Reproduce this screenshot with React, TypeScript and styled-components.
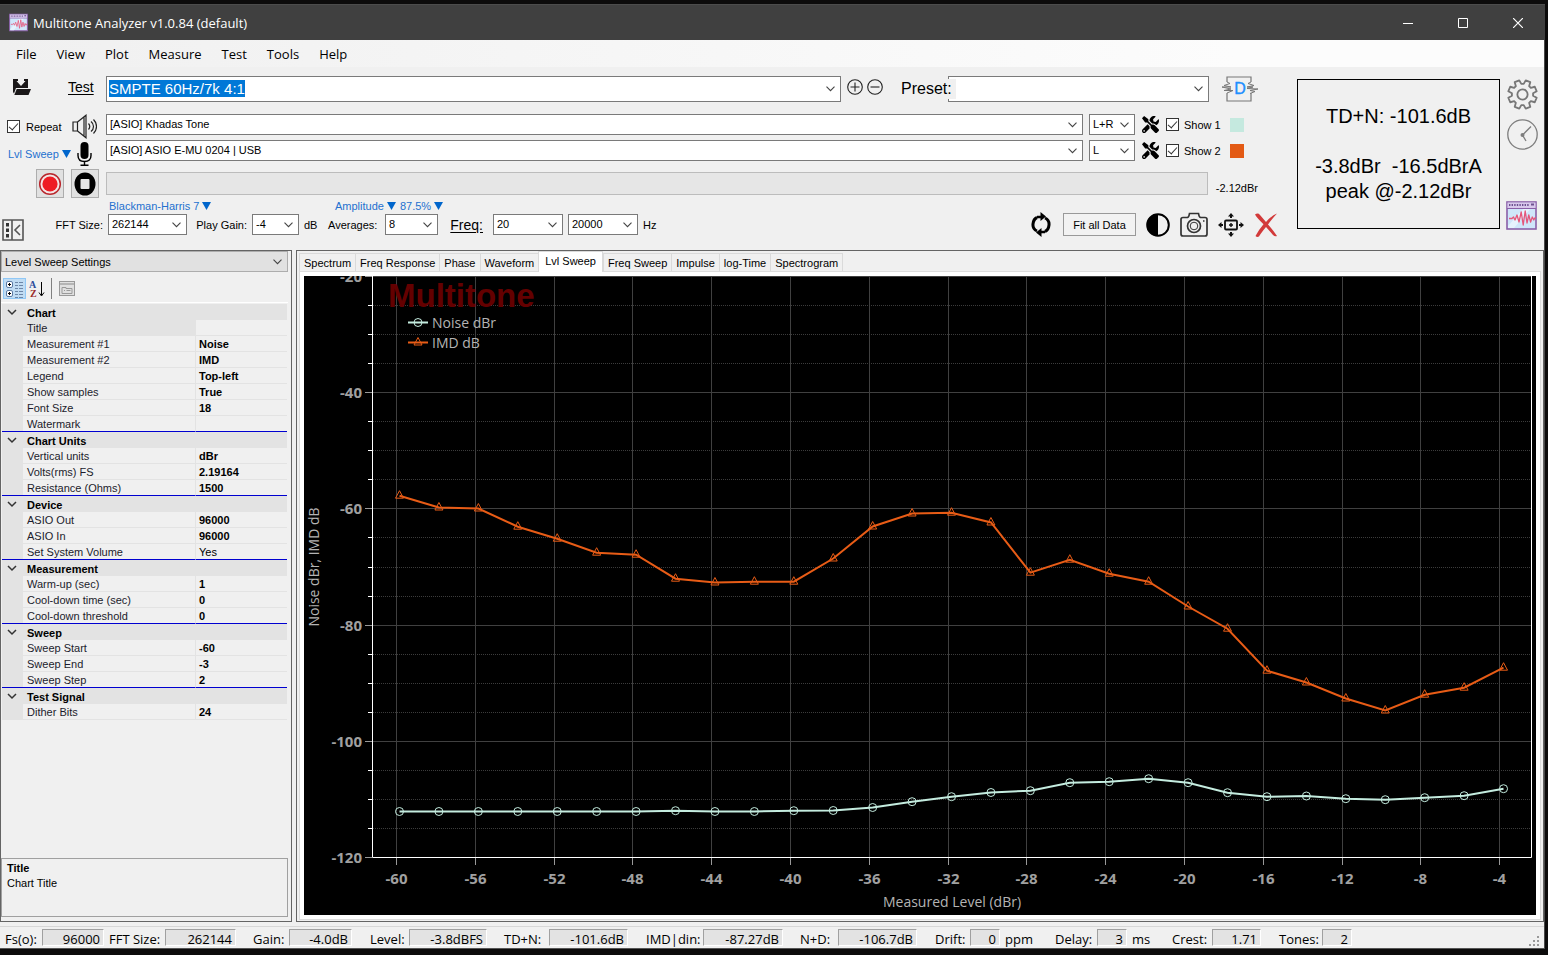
import React, { useEffect, useRef } from "react";
import styled, { createGlobalStyle } from "styled-components";
import { FaTools } from "react-icons/fa";

const sans = `"Liberation Sans", Arial, sans-serif`;
const ui = `"Open Sans", "Noto Sans", sans-serif`;

const GlobalStyle = createGlobalStyle`
  *, *::before, *::after { box-sizing: border-box; }
  body { margin: 0; background: #0c0b0b; font-family: ${sans}; font-size: 11px; color: #000; }
  button, input, select { font: inherit; color: inherit; margin: 0; }
  svg { display: block; flex: none; }
`;

/* ---------- window frame ---------- */

const Desktop = styled.div`
  min-height: 100vh;
  display: flex;
  padding: 4px 3px 6px 0;
  background: #0c0b0b;
`;

const Window = styled.div`
  flex: 1;
  min-width: 0;
  display: flex;
  flex-direction: column;
  background: #f0f0f0;
  border-right: 1px solid #4a4a4a;
`;

const TitleBar = styled.header`
  height: 36px;
  display: flex;
  align-items: center;
  padding-left: 9px;
  gap: 5px;
  background: #404040;
  border-top: 1px solid #4c4c4c;
  color: #fff;
  margin-right: -1px;
`;

const TitleText = styled.h1`
  flex: 1;
  margin: 0;
  font: 400 13px/20px ${ui};
`;

const CaptionButtons = styled.div`
  display: flex;
`;

const CaptionButton = styled.button`
  width: 55px;
  height: 35px;
  padding: 0;
  border: 0;
  background: transparent;
  display: flex;
  align-items: center;
  justify-content: center;
`;

const MenuBar = styled.nav`
  height: 27px;
  display: flex;
  align-items: center;
  padding-left: 6px;
  background: linear-gradient(90deg, #f0f0f0, #fcfcfc 80%);
  font: 13px/20px ${ui};
`;

const MenuItem = styled.button`
  padding: 0 10px;
  border: 0;
  background: transparent;
  line-height: 24px;
`;

/* ---------- shared controls ---------- */

const ComboBox = styled.span<{ $width?: number; $height?: number; $flat?: boolean }>`
  position: relative;
  display: flex;
  flex: ${(p) => (p.$width ? `0 0 ${p.$width}px` : "1 1 0")};
  min-width: 0;
  height: ${(p) => p.$height ?? 21}px;
  background: ${(p) => (p.$flat ? "#e1e1e1" : "#fff")};
  border: 1px solid ${(p) => (p.$flat ? "#adadad" : "#7a7a7a")};

  select, input {
    appearance: none;
    width: 100%;
    min-width: 0;
    padding: 0 20px ${(p) => (p.$flat ? 0 : 2)}px 3px;
    border: 0;
    border-radius: 0;
    outline: 0;
    background: transparent;
  }
  input {
    padding: 0 24px 2px 2px;
    font-size: 15px;
  }
  input::selection { background: #0078d7; color: #fff; }
  svg {
    position: absolute;
    right: 5px;
    top: 50%;
    margin-top: -3px;
    pointer-events: none;
  }
`;

const Chevron = () => (
  <svg width="9" height="6" viewBox="0 0 9 6" fill="none" stroke="#444" strokeWidth="1.1">
    <path d="M.5.7 4.5 4.7 8.5.7" />
  </svg>
);

type ComboProps = { label: string; value: string; width?: number; height?: number; flat?: boolean };
const Combo = ({ label, value, width, height, flat }: ComboProps) => (
  <ComboBox $width={width} $height={height} $flat={flat}>
    <select aria-label={label} defaultValue={value}>
      <option value={value}>{value}</option>
    </select>
    <Chevron />
  </ComboBox>
);

const CheckLabel = styled.label`
  display: flex;
  align-items: center;
  gap: 6px;
  flex: none;
  white-space: nowrap;
`;

const CheckInput = styled.input`
  appearance: none;
  width: 13px;
  height: 13px;
  border: 1px solid #333;
  background: #fff;
  display: grid;
  place-items: center;
  &:checked::after {
    content: "";
    width: 9px;
    height: 5px;
    border: solid #333;
    border-width: 0 0 1px 1px;
    transform: rotate(-48deg);
    margin-top: -3px;
  }
`;

const IconButton = styled.button<{ $framed?: boolean }>`
  flex: none;
  padding: 0;
  border: ${(p) => (p.$framed ? "1px solid #adadad" : "0")};
  background: ${(p) => (p.$framed ? "#e1e1e1" : "transparent")};
  width: ${(p) => (p.$framed ? "28px" : "auto")};
  height: ${(p) => (p.$framed ? "29px" : "auto")};
  display: flex;
  align-items: center;
  justify-content: center;
`;

const LinkButton = styled.button`
  display: flex;
  align-items: center;
  gap: 3px;
  padding: 0;
  border: 0;
  background: transparent;
  color: #2470cf;
  white-space: nowrap;
`;

const Triangle = () => (
  <svg width="9" height="8" viewBox="0 0 9 8"><path d="M0 0h9L4.5 8z" fill="#0066cc" /></svg>
);

/* ---------- header tool area ---------- */

const Header = styled.section`
  height: 183px;
  display: flex;
  padding: 9px 6px 0 0;
`;

const Tools = styled.div`
  flex: 1;
  min-width: 0;
`;

const Row = styled.div<{ $height: number; $after?: number }>`
  display: flex;
  align-items: center;
  height: ${(p) => p.$height}px;
  margin: 0 20px ${(p) => p.$after ?? 0}px 0;
`;

const Side = styled.div<{ $left: number; $gap: number; $top?: number }>`
  flex: 0 0 106px;
  display: flex;
  align-items: center;
  gap: ${(p) => p.$gap}px;
  padding: ${(p) => p.$top ?? 0}px 0 0 ${(p) => p.$left}px;
`;

const Underlined = styled.a`
  color: inherit;
  font-size: 14px;
  text-decoration: underline;
  text-underline-offset: 2px;
`;

const TestSide = styled(Side)`
  padding-bottom: 4px;
`;

const RoundPair = styled.div`
  display: flex;
  gap: 4px;
  padding: 0 12px 4px 6px;
`;

const PresetLabel = styled.span`
  position: relative;
  z-index: 1;
  flex: 0 0 61px;
  margin-right: -8px;
  padding-left: 6px;
  background: #f0f0f0;
  font-size: 16px;
  line-height: 20px;
`;

const DistortionSlot = styled.div`
  flex: 0 0 49px;
  padding-left: 13px;
`;

const ChannelTools = styled.div`
  flex: 0 0 175px;
  display: flex;
  align-items: center;
  gap: 7px;
  padding-left: 6px;
  ${CheckLabel} { width: 57px; gap: 5px; }
`;

const Swatch = styled.span<{ $color: string }>`
  width: 14px;
  height: 14px;
  background: ${(p) => p.$color};
`;

const Meter = styled.div`
  flex: 1;
  height: 23px;
  background: #e6e6e6;
  border: 1px solid #bcbcbc;
`;

const MeterValue = styled.span`
  flex: 0 0 49px;
  padding: 8px 0 0 8px;
`;

const Links = styled.div`
  height: 16px;
  display: flex;
  align-items: center;
  gap: 4px;
  padding-left: 109px;
`;

const LinkSlot = styled.div`
  flex: 0 0 222px;
`;

const Params = styled.div`
  display: flex;
  align-items: center;
  height: 21px;
  padding-left: 2px;
`;

const CollapseSlot = styled(IconButton)`
  width: 22px;
  padding-top: 11px;
`;

const Caption = styled.span<{ $width: number; $end?: boolean }>`
  flex: 0 0 ${(p) => p.$width}px;
  padding: 0 5px;
  white-space: nowrap;
  text-align: ${(p) => (p.$end ? "right" : "left")};
`;

const Gap = styled.span`
  flex: 0 0 5px;
`;

const Spacer = styled.div`
  flex: 1;
`;

const Commands = styled.div`
  display: flex;
  align-items: center;
  gap: 10px;
`;

const FitButton = styled.button`
  width: 73px;
  height: 23px;
  margin: 0 0 0 2px;
  padding: 0;
  border: 1px solid #999;
  background: #f2f2f2;
`;

const Readout = styled.output`
  flex: 0 0 203px;
  height: 150px;
  margin: 3px 6px 0 19px;
  border: 1px solid #000;
  display: flex;
  flex-direction: column;
  align-items: center;
  justify-content: center;
  font-size: 20px;
  line-height: 25px;
  white-space: pre;
`;

const RightIcons = styled.div`
  flex: 0 0 32px;
  display: flex;
  flex-direction: column;
  gap: 9px;
  height: 155px;
  padding-top: 3px;
`;

/* ---------- icons ---------- */

const AppIcon = ({ size }: { size: number }) => (
  <svg width={size} height={size} viewBox="0 0 31 31">
    <rect x="1" y="2" width="29" height="27" fill="#cfe6fa" stroke="#8a5fa8" strokeWidth="1.6" />
    <path d="M18 8h7L8 28H2v-2z" fill="#e6f2fd" />
    <rect x="1.5" y="2.5" width="28" height="5.5" fill="#d9c8ec" />
    <path d="M3 5h20" stroke="#6d5290" strokeWidth="2" strokeDasharray="1.4 1.2" />
    <path d="M1 8.5h29" stroke="#8a5fa8" />
    <path d="M25 4.5h3" stroke="#6d5290" strokeWidth="2" />
    <path d="M3 18.500h3l1.500-1.500 1.500 3 2-5 2 7 2.200-10 2 13 2-14 1.800 12 1.800-8 1.800 7 1.700-5 1.500 3 1-2h1.200" fill="none" stroke="#e5567b" strokeWidth="1.3" strokeLinejoin="round" />
  </svg>
);

const FolderIcon = () => (
  <svg width="18" height="18" viewBox="0 0 18 18" fill="#1a1718">
    <path d="M0 1h5v2H3.500L8 8l4.500-5H11V1h4v9H3L1 15.500 0 14z" />
    <path d="M7 0h2.500v3H12L8.400 6.500 4.800 3H7z" fill="#f0f0f0" />
    <path d="M3.700 11H18l-2.500 6H1.300z" />
  </svg>
);

const SpeakerIcon = () => (
  <svg width="25" height="25" viewBox="0 0 25 25" fill="none" stroke="#222" strokeWidth="1.200">
    <path d="M1 8h4.500v9H1zM5.500 8 14 1.200v22.600L5.500 17M12 3v19" />
    <path d="M16.500 9.500q2.500 3 0 6M19 7.500q2.500 2 2.500 5t-2.500 5M21.500 5.500q3 3 3 7t-3 7" />
  </svg>
);

const MicIcon = () => (
  <svg width="15" height="24" viewBox="0 0 15 24">
    <rect x="3.500" y="0" width="8" height="17" rx="4" fill="#000" />
    <path d="M1 11v2.500q0 6 6.500 6t6.500-6V11M7.500 19.500V23M3.500 23.200h8" fill="none" stroke="#000" strokeWidth="1.400" />
  </svg>
);

const RecordIcon = () => (
  <svg width="24" height="24" viewBox="0 0 24 24">
    <circle cx="12" cy="12" r="10.300" fill="#f3e6e6" stroke="#b8272d" strokeWidth="1.500" />
    <circle cx="12" cy="12" r="7.600" fill="#ee1c24" />
  </svg>
);

const StopIcon = () => (
  <svg width="22" height="24" viewBox="0 0 22 24">
    <ellipse cx="11" cy="12" rx="10.500" ry="11.500" fill="#000" />
    <rect x="6.500" y="7" width="9" height="10" rx="1" fill="#e6e6e6" />
  </svg>
);

const RoundIcon = ({ plus }: { plus?: boolean }) => (
  <svg width="16" height="16" viewBox="0 0 16 16" fill="none" stroke="#222" strokeWidth="1.100">
    <circle cx="8" cy="8" r="7.300" />
    <path d={plus ? "M3.500 8h9M8 3.500v9" : "M3.500 8h9"} />
  </svg>
);

const DistortionIcon = () => (
  <svg width="36" height="26" viewBox="0 0 36 26" fill="none" stroke="#777" strokeWidth="1.200">
    <path d="M5 6V1h24v5M5 17v8h24v-8" />
    <path d="M5 6l3 1.500-6 2 7 1.500H0l9 2-7 1.500h9l-6 2.500M29 6l-3 1.500 6 2-7 1.500h6l-6 1.500 11 .500-8 1.500 5 1-5 2" strokeWidth="1" />
    <text x="18" y="18" textAnchor="middle" fontFamily="Liberation Sans" fontSize="16" fill="#1e8fff" stroke="#1e8fff" strokeWidth=".4">D</text>
  </svg>
);

const CollapseIcon = () => (
  <svg width="22" height="22" viewBox="0 0 22 22" fill="none" stroke="#555" strokeWidth="1.600">
    <path d="M1 1h20v20H1zM10 1v20M18 6l-5 5 5 5" />
    <path d="M5.500 4v3.500M5.500 9.500V13M5.500 15v3.500" stroke="#333" strokeWidth="3" />
  </svg>
);

const RefreshIcon = () => (
  <svg width="20" height="25" viewBox="0 0 20 25" fill="none" stroke="#000" strokeWidth="3">
    <path d="M6 19Q1.500 17 2 12q.5-5 4-6.500M14 6Q18.500 8 18 13q-.5 5-4 6.500" />
    <path d="M9.500 0 15 4.500 9.500 9zM10.500 16v9L5 20.500z" fill="#000" stroke="none" />
    <path d="M6 5h5M14 20H9" strokeWidth="2.500" />
  </svg>
);

const ContrastIcon = () => (
  <svg width="24" height="24" viewBox="0 0 24 24">
    <circle cx="12" cy="12" r="10.800" fill="#f0f0f0" stroke="#000" strokeWidth="2" />
    <path d="M12 1a11 11 0 0 0 0 22z" />
  </svg>
);

const CameraIcon = () => (
  <svg width="28" height="25" viewBox="0 0 28 25" fill="none" stroke="#333" strokeWidth="1.700">
    <path d="M3 5.500h4.500Q9 5 9.500 1.500h9Q19 5 20.500 5.500H25q2 0 2 2V22q0 2-2 2H3q-2 0-2-2V7.500q0-2 2-2z" />
    <circle cx="14" cy="14" r="6.500" />
    <circle cx="14" cy="14" r="3.800" strokeWidth="1" />
    <path d="M23 9h1.500" />
  </svg>
);

const MoveIcon = () => (
  <svg width="26" height="24" viewBox="0 0 26 24" fill="#111">
    <rect x="7" y="7.500" width="12" height="9" rx="1" fill="none" stroke="#111" strokeWidth="1.800" />
    <path d="M13 0l3 3.500h-2V5h-2V3.500h-2zM13 24l3-3.500h-2V19h-2v1.500h-2zM0 12l3.500-3v2H5v2H3.500v2zM26 12l-3.500-3v2H21v2h1.500v2zM12.300 10h1.400v1.300H15v1.400h-1.300V14h-1.400v-1.300H11v-1.400h1.300z" />
  </svg>
);

const DeleteIcon = () => (
  <svg width="24" height="24" viewBox="0 0 24 24">
    <path d="M1 1.500Q4-.5 6 2l6 7Q17 3 23 .5 18 6 14 11.500q5 5.500 9 11.500-2 1-4-1l-7-8Q7 20 5 23.500q-2 1-3.500-.5 3-6 8-11.800Q3 5 1 1.500z" fill="#d23a3a" />
  </svg>
);

const gearPath = (() => {
  const pts: string[] = [];
  for (let i = 0; i < 8; i++) {
    const a = (i * Math.PI) / 4 - Math.PI / 2;
    [[-0.28, 11], [-0.17, 15], [0.17, 15], [0.28, 11]].forEach(([d, r]) => {
      pts.push(`${(16 + r * Math.cos(a + d)).toFixed(2)} ${(16 + r * Math.sin(a + d)).toFixed(2)}`);
    });
  }
  return `M${pts.join("L")}Z`;
})();

const GearIcon = () => (
  <svg width="31" height="31" viewBox="0 0 32 32" fill="none" stroke="#777" strokeWidth="1.900" strokeLinejoin="round">
    <g transform="rotate(22.500 16 16)"><path d={gearPath} /></g>
    <circle cx="16" cy="16" r="5.300" />
  </svg>
);

const ClockIcon = () => (
  <svg width="31" height="31" viewBox="0 0 31 31" fill="none" stroke="#7d7d7d" strokeWidth="1.300">
    <circle cx="15.500" cy="15.500" r="14.700" />
    <path d="M24 7.500 15.500 16l3.500 6" />
    <circle cx="15.500" cy="16" r="2" fill="#7d7d7d" stroke="none" />
  </svg>
);

/* ---------- property panel ---------- */

const Main = styled.main`
  flex: 1;
  display: flex;
  gap: 4px;
  min-height: 0;
`;

const Sidebar = styled.aside`
  flex: 0 0 292px;
  display: flex;
  flex-direction: column;
  border: 1px solid #646464;
  padding: 0 3px 4px 0;
`;

const SelectRow = styled.div`
  display: flex;
`;

const GridTools = styled.div`
  flex: none;
  height: 31px;
  display: flex;
  align-items: center;
  padding: 3px 0 0 2px;
  border-bottom: 1px solid #fff;
`;

const GridTool = styled.button<{ $on?: boolean }>`
  width: 23px;
  height: 21px;
  padding: 0;
  display: grid;
  place-items: center;
  background: ${(p) => (p.$on ? "#c0dcf3" : "transparent")};
  border: 1px solid ${(p) => (p.$on ? "#90c8f6" : "transparent")};
`;

const Divider = styled.span`
  width: 1px;
  height: 21px;
  background: #808080;
  margin: 0 3px 0 2px;
`;

const PropertyTable = styled.table`
  margin: 1px 0 0 1px;
  width: 285px;
  table-layout: fixed;
  border-collapse: separate;
  border-spacing: 0;
  line-height: 13px;
  th, td { height: 16px; padding: 2px 3px 0; text-align: left; white-space: nowrap; }
`;

const GutterCol = styled.col`
  width: 21px;
`;

const NameCol = styled.col`
  width: 172px;
`;

const Gutter = styled.td`
  background: #e3e3e3;
  svg { margin: 0 0 2px 2px; }
`;

const Category = styled.tr`
  background: #e3e3e3;
  td, th { border-bottom: 0; }
  th { padding-left: 4px; font-weight: 700; }
`;

const Property = styled.tr<{ $selected?: boolean; $last?: boolean }>`
  th {
    padding-left: 4px;
    font-weight: 400;
    color: #1c1c2c;
    background: ${(p) => (p.$selected ? "#e3e3e3" : "transparent")};
  }
  th, td { border-bottom: 1px solid ${(p) => (p.$last ? "#0000d0" : "#e3e3e3")}; }
`;

const Value = styled.td<{ $plain?: boolean }>`
  border-left: 1px solid #e3e3e3;
  font-weight: ${(p) => (p.$plain ? 400 : 700)};
`;

const Help = styled.section`
  height: 59px;
  margin-top: auto;
  border: 1px solid #a0a0a0;
  padding: 2px 5px;
  line-height: 15px;
  h2, p { margin: 0; font-size: 11px; }
`;

const groups: { name: string; items: [string, string][] }[] = [
  { name: "Chart", items: [["Title", ""], ["Measurement #1", "Noise"], ["Measurement #2", "IMD"], ["Legend", "Top-left"], ["Show samples", "True"], ["Font Size", "18"], ["Watermark", ""]] },
  { name: "Chart Units", items: [["Vertical units", "dBr"], ["Volts(rms) FS", "2.19164"], ["Resistance (Ohms)", "1500"]] },
  { name: "Device", items: [["ASIO Out", "96000"], ["ASIO In", "96000"], ["Set System Volume", "Yes"]] },
  { name: "Measurement", items: [["Warm-up (sec)", "1"], ["Cool-down time (sec)", "0"], ["Cool-down threshold", "0"]] },
  { name: "Sweep", items: [["Sweep Start", "-60"], ["Sweep End", "-3"], ["Sweep Step", "2"]] },
  { name: "Test Signal", items: [["Dither Bits", "24"]] },
];

/* ---------- chart panel ---------- */

const ChartPanel = styled.section`
  flex: 1;
  min-width: 0;
  display: flex;
  flex-direction: column;
  border: 1px solid #646464;
  padding: 0 2px 1px;
`;

const TabList = styled.div`
  flex: none;
  height: 20px;
  display: flex;
  align-items: flex-end;
`;

const Tab = styled.button<{ $active?: boolean }>`
  position: relative;
  z-index: ${(p) => (p.$active ? 1 : 0)};
  height: ${(p) => (p.$active ? 21 : 18)}px;
  margin: 0 0 ${(p) => (p.$active ? -1 : 0)}px 0;
  padding: 0 ${(p) => (p.$active ? 6 : 4)}px ${(p) => (p.$active ? 2 : 0)}px;
  border: 1px solid #dadada;
  border-bottom: 0;
  border-right-width: ${(p) => (p.$active ? 1 : 0)}px;
  background: ${(p) => (p.$active ? "#fff" : "#f0f0f0")};
  white-space: nowrap;
  &:last-child { border-right-width: 1px; }
`;

const TabPage = styled.div`
  flex: 1;
  display: flex;
  border: 1px solid #dcdcdc;
  background: #fff;
  padding: 4px;
`;

const Plot = styled.div`
  flex: 1;
  min-width: 0;
  background: #000;
  svg { width: 100%; height: auto; }
`;

const tabs = ["Spectrum", "Freq Response", "Phase", "Waveform", "Lvl Sweep", "Freq Sweep", "Impulse", "log-Time", "Spectrogram"];

const imd = [495.7, 507.5, 508.5, 526.7, 538.7, 552.7, 554.7, 578.7, 582.5, 581.7, 581.7, 558.5, 526.5, 513.5, 512.7, 522.5, 572.7, 559.7, 573.7, 581.7, 606.5, 628.7, 670.7, 682.5, 698.5, 710.5, 694.7, 687.7, 667.7];
const noise = [811.5, 811.5, 811.5, 811.5, 811.5, 811.5, 811.5, 810.7, 811.5, 811.5, 810.7, 810.5, 807.5, 801.7, 796.7, 792.5, 790.7, 782.7, 781.7, 778.7, 782.7, 792.7, 796.7, 796, 798.7, 799.7, 797.7, 795.7, 788.7];
const px = (i: number) => 95.5 + i * 39.43;
const toPoints = (ys: number[]) => ys.map((y, i) => `${px(i).toFixed(1)},${(y - 276).toFixed(1)}`).join(" ");
const xAt = (db: number) => Math.round(92 + (db + 60) * 19.7) + 0.5;
const yAt = (db: number) => Math.round(581 - (db + 120) * 5.81) + 0.5;

const TriangleMark = ({ x, y }: { x: number; y: number }) => (
  <path d={`M${x} ${y - 5}l4 7.500h-8z`} fill="none" stroke="#e85c16" />
);

const Chart = () => {
  const xTicks = Array.from({ length: 15 }, (_, i) => -60 + i * 4);
  const yTicks = [-20, -40, -60, -80, -100, -120];
  const minor = Array.from({ length: 19 }, (_, i) => -115 + i * 5).filter((v) => v % 20 !== 0);
  return (
    <svg viewBox="0 0 1232 639" role="img" aria-label="Level sweep chart">
      {minor.map((v) => (
        <g key={v}>
          <path d={`M69 ${yAt(v)}H1227`} stroke="#3c3c3c" strokeDasharray="1 1" />
          <path d={`M64 ${yAt(v)}h4`} stroke="#fff" />
        </g>
      ))}
      {yTicks.map((v) => (
        <g key={v}>
          <path d={`M69 ${yAt(v)}H1227`} stroke="#404040" />
          <path d={`M61 ${yAt(v)}h7`} stroke="#999" />
          <text x="58" y={yAt(v) + 5} textAnchor="end" fontFamily="Open Sans" fontWeight="700" fontSize="15" fill="#a0a0a0">{v}</text>
        </g>
      ))}
      {xTicks.map((v) => (
        <g key={v}>
          <path d={`M${xAt(v)} 0V581`} stroke="#404040" />
          <path d={`M${xAt(v)} 582v7`} stroke="#999" />
          <text x={xAt(v)} y="608" textAnchor="middle" fontFamily="Open Sans" fontWeight="700" fontSize="15" fill="#a0a0a0">{v}</text>
        </g>
      ))}
      <path d="M68.500 0V581.500H1227.500V0" fill="none" stroke="#fff" />
      <text x="84" y="31" fontFamily="Liberation Sans" fontWeight="700" fontSize="33" fill="#640000">Multitone</text>
      <g fontFamily="Open Sans" fontSize="14" fill="#b4b4b4">
        <text x="128" y="52">Noise dBr</text>
        <text x="128" y="72">IMD dB</text>
        <text x="648" y="631" textAnchor="middle">Measured Level (dBr)</text>
        <text x="15" y="291" textAnchor="middle" transform="rotate(-90 15 291)">Noise dBr, IMD dB</text>
      </g>
      <path d="M104 46.500h20" stroke="#c4ecdf" strokeWidth="2" />
      <circle cx="114" cy="46.500" r="4" fill="none" stroke="#c4ecdf" />
      <path d="M104 66.500h20" stroke="#e85c16" strokeWidth="2" />
      <TriangleMark x={114} y={66.5} />
      <polyline points={toPoints(imd)} fill="none" stroke="#e85c16" strokeWidth="2" />
      {imd.map((y, i) => <TriangleMark key={i} x={px(i)} y={y - 276} />)}
      <polyline points={toPoints(noise)} fill="none" stroke="#c4ecdf" strokeWidth="2" />
      {noise.map((y, i) => <circle key={i} cx={px(i)} cy={y - 276} r="4" fill="none" stroke="#c4ecdf" />)}
    </svg>
  );
};

/* ---------- status bar ---------- */

const StatusBar = styled.footer`
  flex: none;
  height: 27px;
  padding: 4px 0 0;
  display: flex;
`;

const StatusStrip = styled.div`
  flex: 1;
  display: flex;
  padding: 2px 4px 0 5px;
  border-top: 1px solid #d7d7d7;
  border-bottom: 1px solid #555;
  font: 13px/20px ${ui};
`;

const StatusLabel = styled.span<{ $width: number }>`
  flex: 0 0 ${(p) => p.$width}px;
  white-space: nowrap;
`;

const StatusValue = styled.span<{ $width: number; $after: number }>`
  flex: 0 0 ${(p) => p.$width}px;
  height: 17px;
  margin-right: ${(p) => p.$after}px;
  padding-right: 3px;
  border: 1px solid #fff;
  border-top-color: #a0a0a0;
  border-left-color: #a0a0a0;
  background: #e3e3e3;
  line-height: 19px;
  text-align: right;
`;

const Grip = styled.svg`
  margin: 7px 0 0 auto;
`;

const status: { label: string; lw: number; value: string; vw: number; after: number; unit?: string; uw?: number }[] = [
  { label: "Fs(o):", lw: 37, value: "96000", vw: 62, after: 5 },
  { label: "FFT Size:", lw: 56, value: "262144", vw: 71, after: 17 },
  { label: "Gain:", lw: 36, value: "-4.0dB", vw: 63, after: 18 },
  { label: "Level:", lw: 39, value: "-3.8dBFS", vw: 78, after: 17 },
  { label: "TD+N:", lw: 45, value: "-101.6dB", vw: 79, after: 18 },
  { label: "IMD|din:", lw: 57, value: "-87.27dB", vw: 80, after: 17 },
  { label: "N+D:", lw: 38, value: "-106.7dB", vw: 79, after: 18 },
  { label: "Drift:", lw: 35, value: "0", vw: 30, after: 5, unit: "ppm", uw: 50 },
  { label: "Delay:", lw: 42, value: "3", vw: 30, after: 5, unit: "ms", uw: 40 },
  { label: "Crest:", lw: 40, value: "1.71", vw: 49, after: 18 },
  { label: "Tones:", lw: 43, value: "2", vw: 30, after: 0 },
];

/* ---------- page ---------- */

const channels = [
  { device: "[ASIO] Khadas Tone", channel: "L+R", label: "Show 1", color: "#c5e9df" },
  { device: "[ASIO] ASIO E-MU 0204 | USB", channel: "L", label: "Show 2", color: "#e35a14" },
];

const ChannelControls = ({ index }: { index: number }) => {
  const c = channels[index];
  return (
    <>
      <Combo label={`Device ${index + 1}`} value={c.device} />
      <ChannelTools>
        <Combo label={`Channel ${index + 1}`} value={c.channel} width={46} />
        <IconButton aria-label="Device setup"><FaTools size={17} /></IconButton>
        <CheckLabel><CheckInput type="checkbox" defaultChecked />{c.label}</CheckLabel>
        <Swatch $color={c.color} />
      </ChannelTools>
    </>
  );
};

export default function App() {
  const testInput = useRef<HTMLInputElement>(null);
  useEffect(() => {
    testInput.current?.focus();
    testInput.current?.select();
  }, []);

  return (
    <Desktop>
      <GlobalStyle />
      <Window>
        <TitleBar>
          <AppIcon size={19} />
          <TitleText>Multitone Analyzer v1.0.84 (default)</TitleText>
          <CaptionButtons>
            <CaptionButton aria-label="Minimize">
              <svg width="10" height="10" viewBox="0 0 10 10" stroke="#fff"><path d="M0 5.500h10" /></svg>
            </CaptionButton>
            <CaptionButton aria-label="Maximize">
              <svg width="10" height="10" viewBox="0 0 10 10" stroke="#fff" fill="none"><path d="M.5.5h9v9h-9z" /></svg>
            </CaptionButton>
            <CaptionButton aria-label="Close">
              <svg width="10" height="10" viewBox="0 0 10 10" stroke="#fff" strokeWidth="1.200"><path d="M0 0l10 10M10 0 0 10" /></svg>
            </CaptionButton>
          </CaptionButtons>
        </TitleBar>

        <MenuBar>
          {["File", "View", "Plot", "Measure", "Test", "Tools", "Help"].map((m) => <MenuItem key={m}>{m}</MenuItem>)}
        </MenuBar>

        <Header>
          <Tools>
            <Row $height={26} $after={12}>
              <TestSide $left={13} $gap={37}>
                <IconButton aria-label="Load test"><FolderIcon /></IconButton>
                <Underlined href="#test">Test</Underlined>
              </TestSide>
              <ComboBox $height={26}>
                <input ref={testInput} aria-label="Test" spellCheck={false} defaultValue="SMPTE 60Hz/7k 4:1" />
                <Chevron />
              </ComboBox>
              <RoundPair>
                <IconButton aria-label="Add"><RoundIcon plus /></IconButton>
                <IconButton aria-label="Remove"><RoundIcon /></IconButton>
              </RoundPair>
              <PresetLabel>Preset:</PresetLabel>
              <Combo label="Preset" value="" width={261} height={26} />
              <DistortionSlot><DistortionIcon /></DistortionSlot>
            </Row>

            <Row $height={21} $after={5}>
              <Side $left={7} $gap={11} $top={4}>
                <CheckLabel><CheckInput type="checkbox" defaultChecked />Repeat</CheckLabel>
                <SpeakerIcon />
              </Side>
              <ChannelControls index={0} />
            </Row>

            <Row $height={21} $after={8}>
              <Side $left={8} $gap={6} $top={6}>
                <LinkButton>Lvl Sweep <Triangle /></LinkButton>
                <MicIcon />
              </Side>
              <ChannelControls index={1} />
            </Row>

            <Row $height={29}>
              <Side $left={36} $gap={7}>
                <IconButton $framed aria-label="Record"><RecordIcon /></IconButton>
                <IconButton $framed aria-label="Stop"><StopIcon /></IconButton>
              </Side>
              <Meter />
              <MeterValue>-2.12dBr</MeterValue>
            </Row>

            <Links>
              <LinkSlot><LinkButton>Blackman-Harris 7 <Triangle /></LinkButton></LinkSlot>
              <LinkButton>Amplitude <Triangle /></LinkButton>
              <LinkButton>87.5% <Triangle /></LinkButton>
            </Links>

            <Params>
              <CollapseSlot aria-label="Toggle side panel"><CollapseIcon /></CollapseSlot>
              <Caption $width={84} $end>FFT Size:</Caption>
              <Combo label="FFT Size" value="262144" width={79} />
              <Caption $width={65} $end>Play Gain:</Caption>
              <Combo label="Play Gain" value="-4" width={47} />
              <Caption $width={24}>dB</Caption>
              <Caption $width={62}>Averages:</Caption>
              <Combo label="Averages" value="8" width={53} />
              <Caption $width={50} $end><Underlined href="#freq">Freq:</Underlined></Caption>
              <Gap />
              <Combo label="Lowest frequency" value="20" width={70} />
              <Gap />
              <Combo label="Highest frequency" value="20000" width={70} />
              <Caption $width={24}>Hz</Caption>
              <Spacer />
              <Commands>
                <IconButton aria-label="Refresh"><RefreshIcon /></IconButton>
                <FitButton>Fit all Data</FitButton>
                <IconButton aria-label="Invert colours"><ContrastIcon /></IconButton>
                <IconButton aria-label="Take picture"><CameraIcon /></IconButton>
                <IconButton aria-label="Fit view"><MoveIcon /></IconButton>
                <IconButton aria-label="Clear"><DeleteIcon /></IconButton>
              </Commands>
            </Params>
          </Tools>

          <Readout>
            <span>TD+N: -101.6dB</span>
            <span> </span>
            <span>-3.8dBr  -16.5dBrA</span>
            <span>peak @-2.12dBr</span>
          </Readout>

          <RightIcons>
            <IconButton aria-label="Settings"><GearIcon /></IconButton>
            <IconButton aria-label="History"><ClockIcon /></IconButton>
            <Spacer />
            <AppIcon size={31} />
          </RightIcons>
        </Header>

        <Main>
          <Sidebar>
            <SelectRow><Combo label="Settings group" value="Level Sweep Settings" flat height={21} /></SelectRow>
            <GridTools>
              <GridTool $on aria-label="Categorized">
                <svg width="18" height="18" viewBox="0 0 18 18" fill="none" stroke="#24364f">
                  <rect x=".5" y="1.500" width="6" height="6" rx="1.500" fill="#fff" stroke="#5b7ba5" />
                  <rect x=".5" y="10.500" width="6" height="6" rx="1.500" fill="#fff" stroke="#5b7ba5" />
                  <path d="M2 4.500h3M3.500 3v3M2 13.500h3M3.500 12v3" stroke="#000" />
                  <path d="M9 2.500h3M9 5.500h3M9 8.500h3M9 11.500h3M9 14.500h3M9 17.500h3M13 2.500h4M13 5.500h4M13 8.500h4M13 11.500h4M13 14.500h4M13 17.500h4" stroke="#6d87a8" />
                </svg>
              </GridTool>
              <GridTool aria-label="Alphabetical">
                <svg width="17" height="18" viewBox="0 0 17 18">
                  <g fontFamily="Liberation Serif" fontWeight="700" fontSize="10">
                    <text x="0" y="8" fill="#2b4c9b">A</text>
                    <text x="1" y="17" fill="#9b2b2b">Z</text>
                  </g>
                  <path d="M12.500 2v13M10 12.500l2.500 3.500 2.500-3.500" fill="none" stroke="#000" />
                </svg>
              </GridTool>
              <Divider />
              <GridTool aria-label="Property pages">
                <svg width="16" height="15" viewBox="0 0 16 15" fill="none" stroke="#999">
                  <rect x=".5" y=".5" width="15" height="14" fill="#e0e0e0" />
                  <path d="M1 3h14" strokeWidth="2" stroke="#b5b5b5" />
                  <path d="M3 12.500v-6h4v1h6v5zM5 9.500h1M7.500 9.500h4" />
                </svg>
              </GridTool>
            </GridTools>
            <PropertyTable>
              <colgroup><GutterCol /><NameCol /><col /></colgroup>
              <tbody>
                {groups.map((g, gi) => (
                  <React.Fragment key={g.name}>
                    <Category>
                      <Gutter>
                        <svg width="10" height="7" viewBox="0 0 10 7" fill="none" stroke="#333" strokeWidth="1.500"><path d="M1 1l4 4 4-4" /></svg>
                      </Gutter>
                      <th colSpan={2} scope="colgroup">{g.name}</th>
                    </Category>
                    {g.items.map(([name, value], i) => (
                      <Property key={name} $selected={name === "Title"} $last={i === g.items.length - 1 && gi < groups.length - 1}>
                        <Gutter />
                        <th scope="row">{name}</th>
                        <Value $plain={value === "Yes"}>{value}</Value>
                      </Property>
                    ))}
                  </React.Fragment>
                ))}
              </tbody>
            </PropertyTable>
            <Help>
              <h2>Title</h2>
              <p>Chart Title</p>
            </Help>
          </Sidebar>

          <ChartPanel>
            <TabList role="tablist">
              {tabs.map((t) => (
                <Tab key={t} role="tab" aria-selected={t === "Lvl Sweep"} $active={t === "Lvl Sweep"}>{t}</Tab>
              ))}
            </TabList>
            <TabPage role="tabpanel">
              <Plot><Chart /></Plot>
            </TabPage>
          </ChartPanel>
        </Main>

        <StatusBar>
          <StatusStrip>
            {status.map((s) => (
              <React.Fragment key={s.label}>
                <StatusLabel $width={s.lw}>{s.label}</StatusLabel>
                <StatusValue $width={s.vw} $after={s.after}>{s.value}</StatusValue>
                {s.unit && <StatusLabel $width={s.uw ?? 0}>{s.unit}</StatusLabel>}
              </React.Fragment>
            ))}
            <Grip width="11" height="11" viewBox="0 0 11 11" fill="#999">
              <path d="M8 0h2v2H8zM4 4h2v2H4zM8 4h2v2H8zM0 8h2v2H0zM4 8h2v2H4zM8 8h2v2H8z" />
            </Grip>
          </StatusStrip>
        </StatusBar>
      </Window>
    </Desktop>
  );
}
